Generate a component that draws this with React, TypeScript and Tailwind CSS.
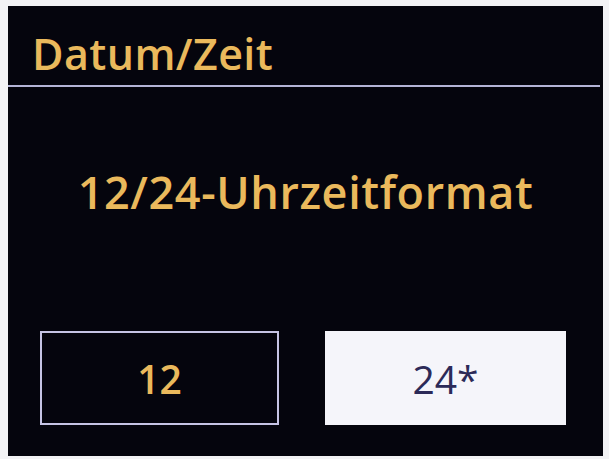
export default function App() {
  return (
    <div className="w-[609px] h-[459px] bg-[#f3f3f5] pt-[6px] pl-[8px]" style={{ fontFamily: '"Open Sans", sans-serif' }}>
      <div className="w-[595px] h-[450px] bg-[#05050d] flex flex-col">
        {/* Header */}
        <div className="h-[79px] flex items-end pl-[24px] pb-[10px]">
          <span className="text-[#eab95c] text-[43px] font-semibold leading-none tracking-[0.4px]">Datum/Zeit</span>
        </div>
        <div className="h-[2px] bg-[#b4b4d6] w-[592px]" />

        {/* Title */}
        <div className="pt-[82px] flex justify-center">
          <span className="text-[#eab95c] text-[45px] font-semibold leading-none tracking-[0.6px]">12/24-Uhrzeitformat</span>
        </div>

        {/* Options */}
        <div className="mt-[117px] flex pl-[32px] gap-[46px]">
          <div className="w-[239px] h-[94px] border-2 border-[#c6c4e4] flex items-center justify-center">
            <span className="text-[#eab95c] text-[39px] font-semibold leading-none">12</span>
          </div>
          <div className="w-[241px] h-[94px] bg-[#f5f5fa] flex items-center justify-center">
            <span className="text-[#2c2a58] text-[39px] leading-none">24*</span>
          </div>
        </div>
      </div>
    </div>
  );
}
